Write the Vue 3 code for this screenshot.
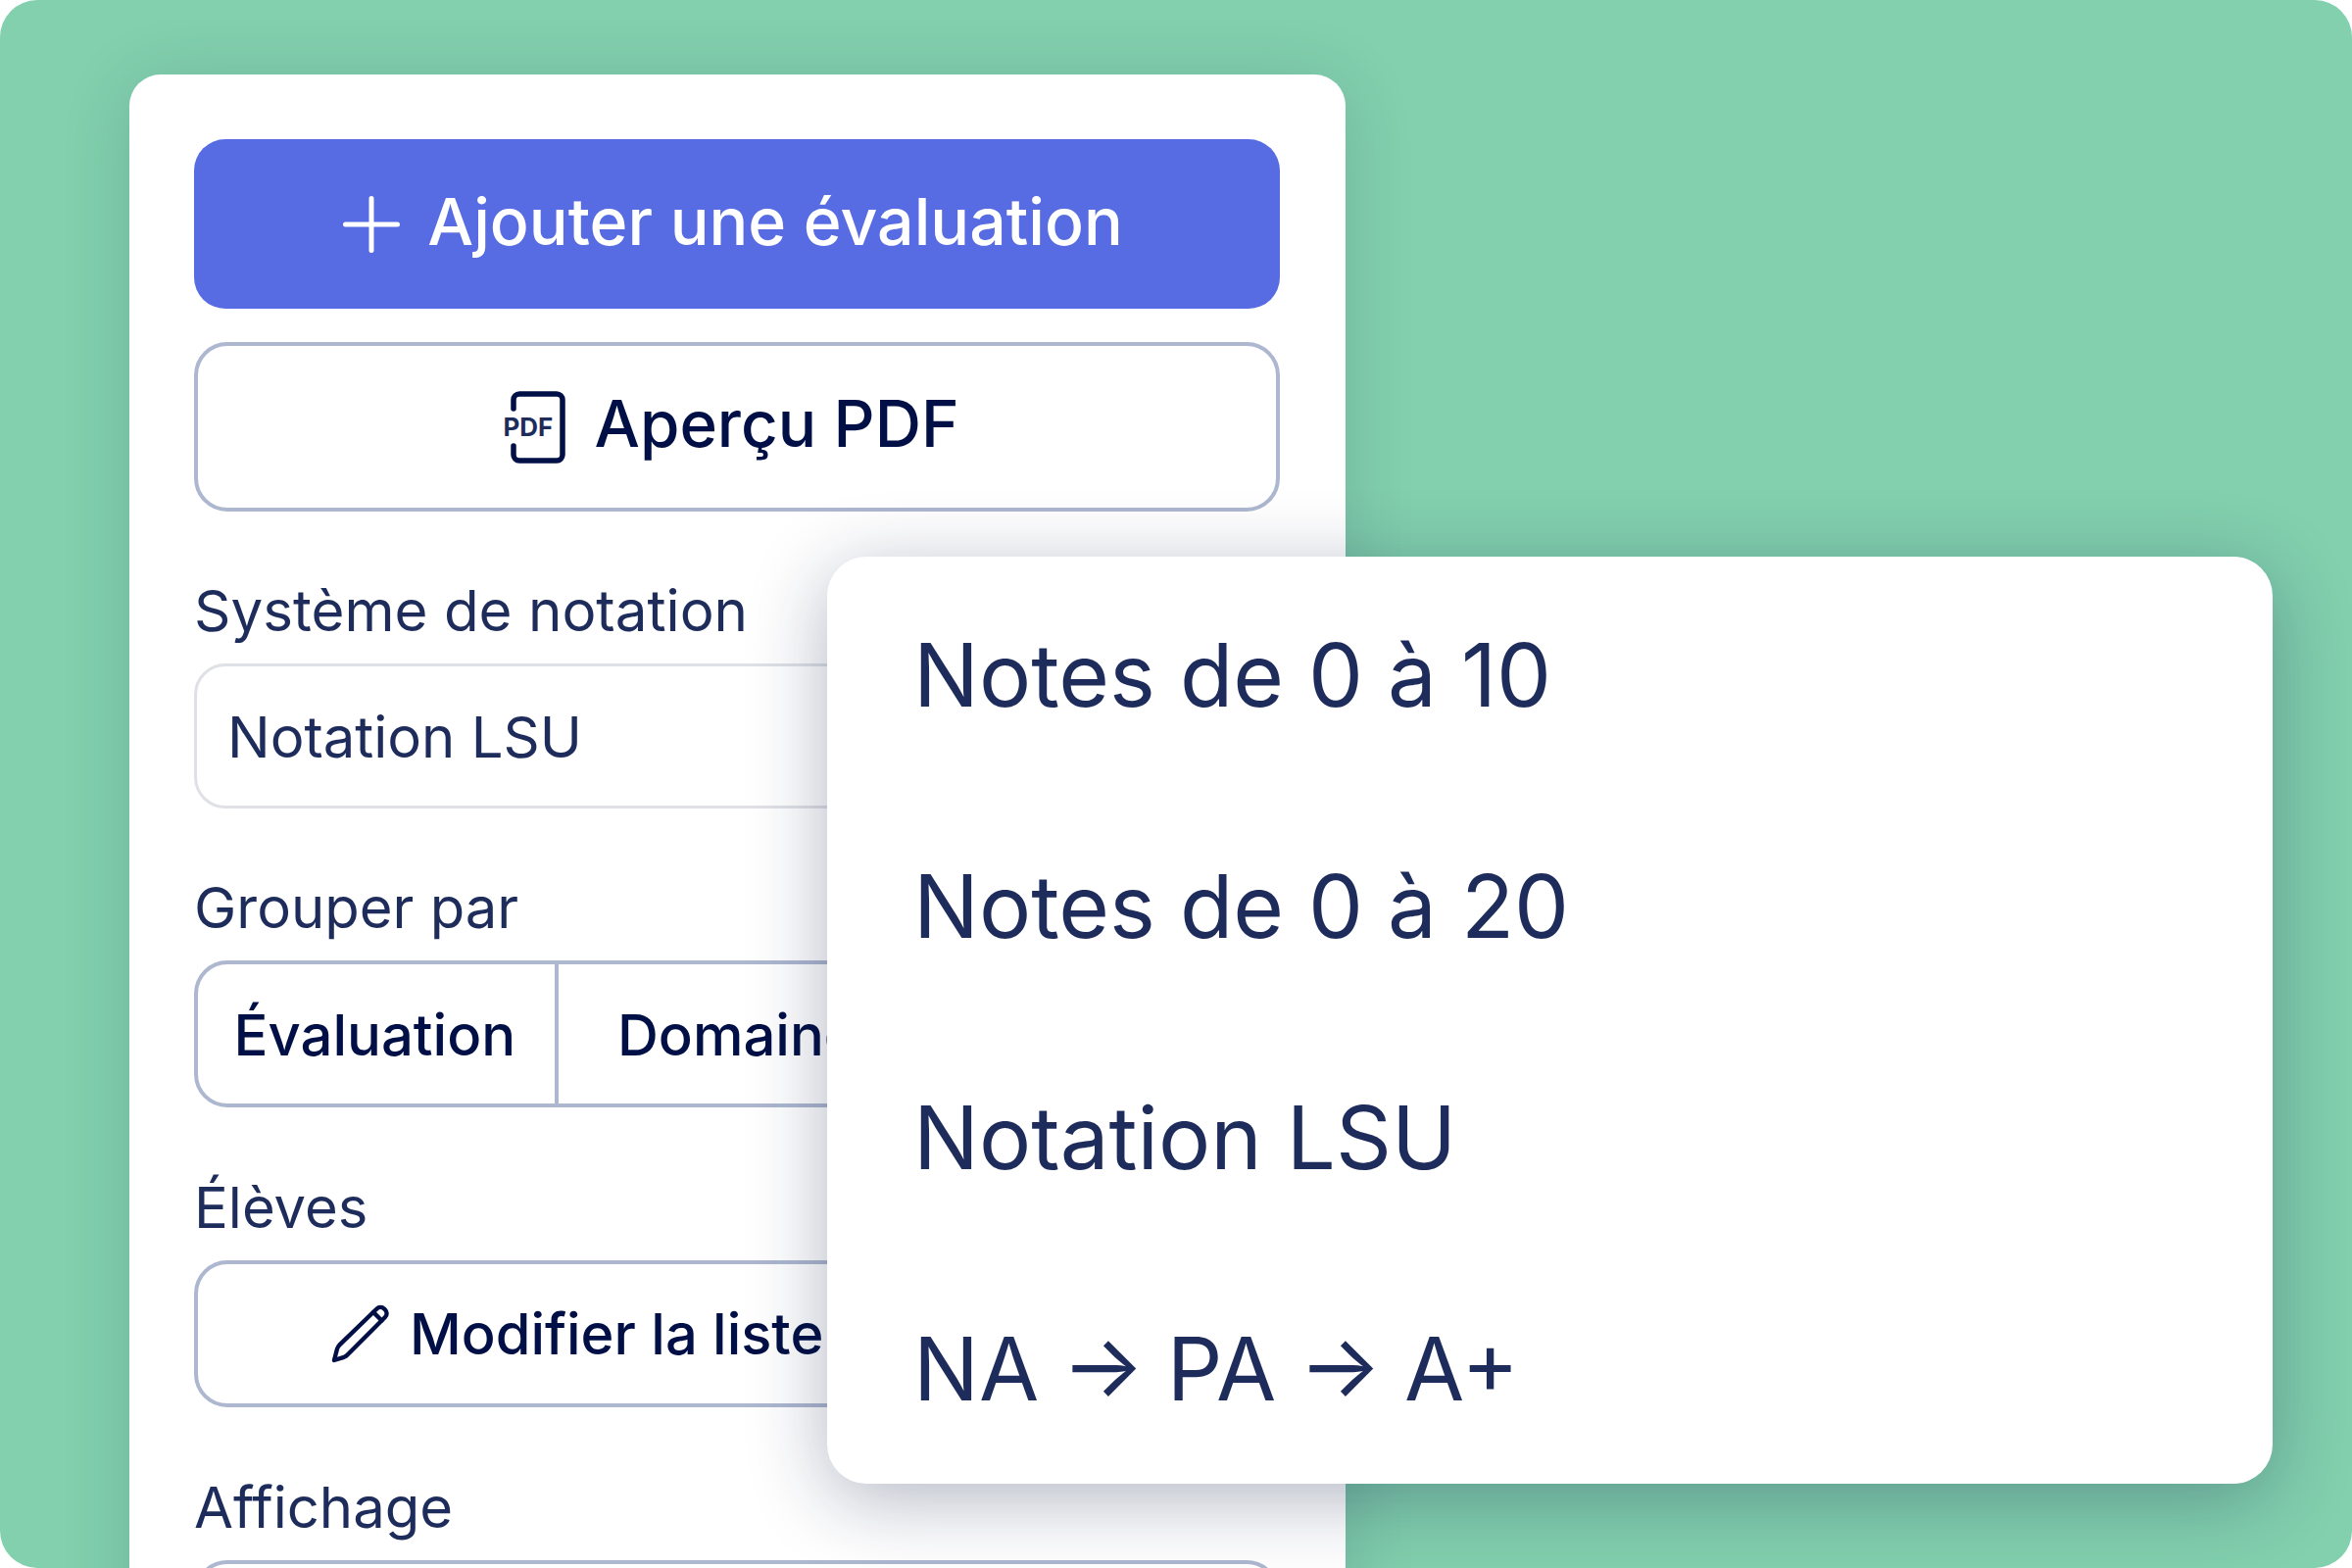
<script setup>
const options = ['Notes de 0 à 10', 'Notes de 0 à 20', 'Notation LSU', 'NA → PA → A+']
</script>

<template>
  <div class="stage">
    <section class="card">
      <button class="btn primary">
        <svg class="plus" viewBox="0 0 58 58" fill="none" stroke="#fff" stroke-width="5" stroke-linecap="round">
          <path d="M29 2.500v53M2.500 29h53" />
        </svg>
        <span class="btn-text">Ajouter une évaluation</span>
      </button>
      <button class="btn outline pdf-btn">
        <span class="pdf-icon">
          <svg viewBox="0 0 64 74" fill="none" stroke="#000f45" stroke-width="5.5" stroke-linecap="round" stroke-linejoin="round">
            <path d="M11 18V9a6 6 0 0 1 6-6h38a6 6 0 0 1 6 6v56a6 6 0 0 1-6 6H17a6 6 0 0 1-6-6v-9" />
          </svg>
          <span class="pdf-tag">PDF</span>
        </span>
        <span class="btn-text">Aperçu PDF</span>
      </button>

      <label class="label first">Système de notation</label>
      <div class="select">Notation LSU</div>

      <label class="label after-select">Grouper par</label>
      <div class="segments">
        <span class="seg seg-a">Évaluation</span>
        <span class="seg seg-b">Domaine</span>
      </div>

      <label class="label">Élèves</label>
      <button class="btn outline list-btn">
        <svg class="pencil" viewBox="0 0 60 60" fill="none" stroke="#000f45" stroke-width="4.4" stroke-linejoin="round" stroke-linecap="round">
          <path d="M3 57l3-11.500a9 9 0 0 1 2.200-3.800L46.500 4.500a5.200 5.200 0 0 1 7.500 0l1 1a5.200 5.200 0 0 1 0 7.500L16.500 51.500a9 9 0 0 1-3.500 2.300z" />
          <path d="M43 8l8.500 8.500" />
        </svg>
        Modifier la liste
      </button>

      <label class="label">Affichage</label>
      <div class="tail"></div>
    </section>

    <ul class="menu">
      <li v-for="o in options" :key="o">{{ o }}</li>
    </ul>
  </div>
</template>

<style>
html, body { margin: 0; background: #fff; }
</style>

<style scoped>
.stage {
  position: relative;
  width: 2400px;
  height: 1600px;
  overflow: hidden;
  background: #82d0ae;
  border-radius: 38px;
  font-family: Inter, "Liberation Sans", sans-serif;
  color: #1e2c5c;
}
.card {
  box-sizing: border-box;
  width: 1241px;
  height: 1620px;
  margin-left: 132px;
  position: relative;
  top: 76px;
  padding: 66px 67px 66px 66px;
  background: #fff;
  border-radius: 32px;
  box-shadow: 0 8px 70px rgba(20, 40, 70, 0.16);
}
.btn {
  box-sizing: border-box;
  display: flex;
  align-items: center;
  justify-content: center;
  width: 100%;
  font-family: inherit;
  background: #fff;
  padding: 0;
}
.btn-text { padding-bottom: 6px; }
.primary {
  height: 173px;
  border: 0;
  border-radius: 32px;
  background: #576ce2;
  color: #fff;
  font-size: 66.2px;
  font-weight: 500;
  gap: 28px;
  padding-right: 8px;
}
.plus { width: 58px; height: 58px; }
.outline {
  border: 4px solid #adb7d0;
  border-radius: 34px;
  color: #000f45;
  font-weight: 500;
}
.pdf-btn {
  height: 173px;
  margin-top: 34px;
  font-size: 65.5px;
  gap: 29px;
  padding-right: 12px;
}
.pdf-icon {
  position: relative;
  width: 64px;
  height: 74px;
  display: block;
}
.pdf-icon svg { display: block; width: 64px; height: 74px; }
.pdf-tag {
  position: absolute;
  left: 0;
  top: 24px;
  font-size: 26px;
  line-height: 26px;
  font-weight: 700;
  color: #1e2c5c;
  background: #fff;
}
.label {
  display: block;
  height: 87px;
  margin-top: 69px;
  font-size: 58px;
  line-height: 67px;
  color: #1e2c5c;
}
.label.first { margin-top: 68px; font-size: 58.3px; }
.label.after-select { margin-top: 67.5px; }
.select {
  box-sizing: border-box;
  height: 148px;
  display: flex;
  align-items: center;
  padding: 2px 0 0 31px;
  border: 3px solid #dfe1e6;
  border-radius: 32px;
  font-size: 58px;
  color: #1e2c5c;
}
.segments {
  box-sizing: border-box;
  height: 150px;
  display: flex;
  border: 4px solid #adb7d0;
  border-radius: 34px;
  color: #000f45;
  font-size: 58px;
  font-weight: 500;
}
.seg { display: flex; align-items: center; padding-top: 2px; }
.seg-a {
  box-sizing: border-box;
  width: 368px;
  padding-left: 36.5px;
  border-right: 4px solid #adb7d0;
}
.seg-b { padding-left: 60px; }
.list-btn {
  height: 150px;
  font-size: 57.8px;
  gap: 20px;
  justify-content: flex-start;
  padding-left: 136px;
}
.pencil { width: 60px; height: 60px; }
.tail {
  box-sizing: border-box;
  height: 150px;
  border: 4px solid #adb7d0;
  border-radius: 34px;
}
.menu {
  position: absolute;
  left: 844px;
  top: 568px;
  box-sizing: border-box;
  width: 1475px;
  height: 946px;
  margin: 0;
  padding: 2px 0 0 88px;
  list-style: none;
  display: flex;
  flex-direction: column;
  justify-content: space-around;
  background: #fff;
  border-radius: 40px;
  box-shadow: 0 16px 80px rgba(20, 30, 70, 0.32);
  font-size: 88.8px;
  color: #1e2c5c;
}
.menu li:last-child { word-spacing: -2px; }
</style>
